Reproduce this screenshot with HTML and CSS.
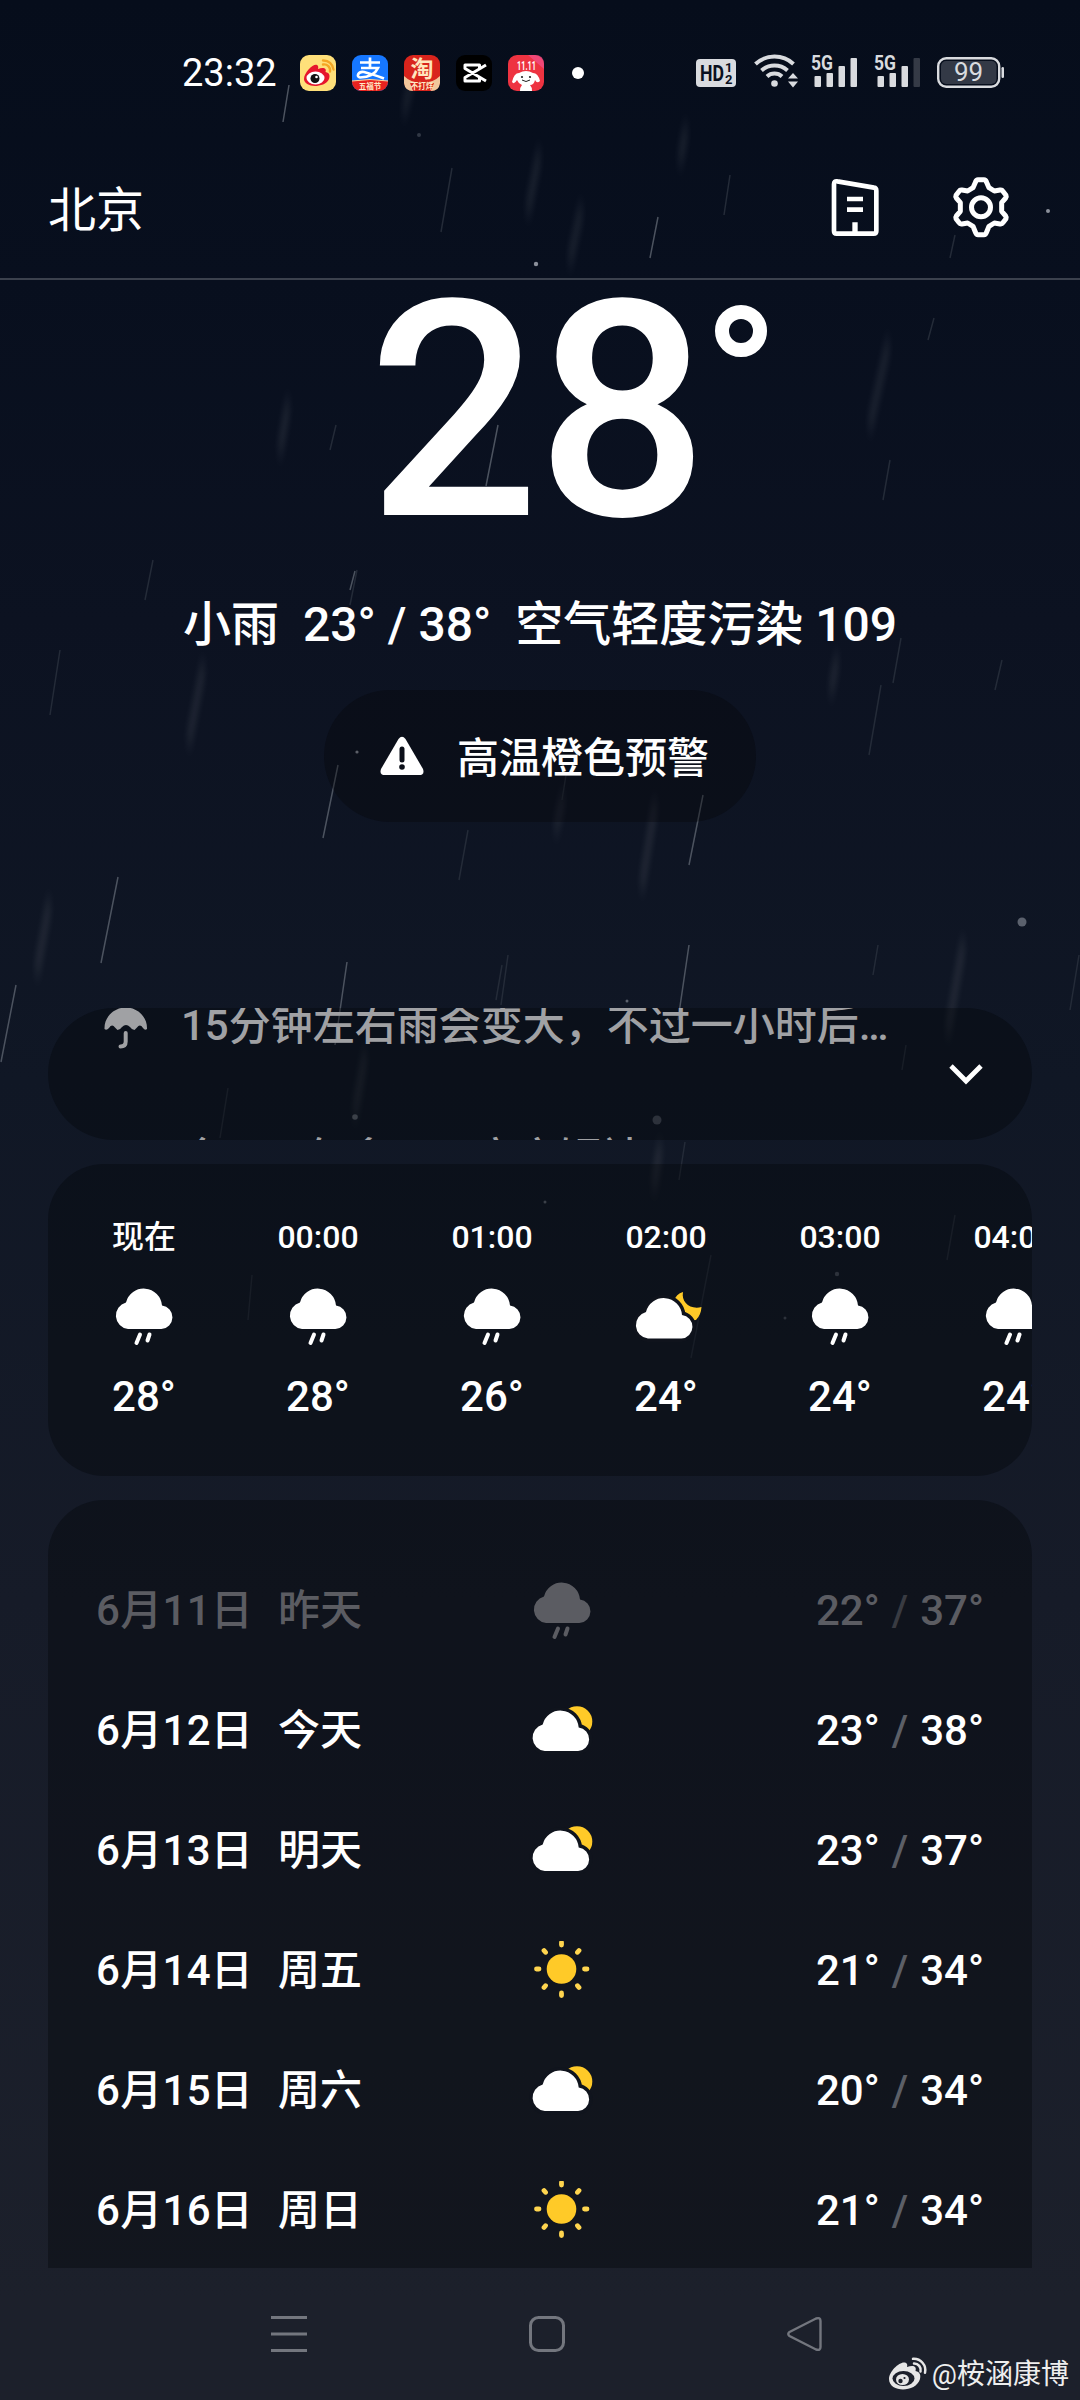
FILE: index.html
```html
<!DOCTYPE html>
<html lang="zh-CN">
<head>
<meta charset="utf-8">
<title>北京天气</title>
<link rel="stylesheet" href="styles.css">
</head>
<body>
<svg class="defs" width="0" height="0">
  <defs>
    <path id="cloud" d="M14 42A13.500 13.500 0 0 1 12 15.500A18.300 18.300 0 0 1 48 18.500A11.800 11.800 0 0 1 47.400 42Z"/>
    <symbol id="rain" viewBox="0 0 60 60" overflow="visible">
      <use href="#cloud"/>
      <path d="M26 47.500L22.500 56M35.500 47.500L33.500 53.500" fill="none" stroke="currentColor" stroke-width="4" stroke-linecap="round"/>
    </symbol>
    <symbol id="partly" viewBox="0 0 60 60" overflow="visible">
      <circle cx="45" cy="20.500" r="15.300" fill="#ffca28"/>
      <use href="#cloud" x="-1.300" y="8" stroke="#10141d" stroke-width="7"/>
      <use href="#cloud" x="-1.300" y="8"/>
    </symbol>
    <symbol id="night" viewBox="0 0 60 60" overflow="visible">
      <path d="M47 5C45 15 54 23 65.500 20Q65 28 60 33L46 34L38 14Q40 7 47 5Z" fill="#ffca28"/>
      <use href="#cloud" x="-2" y="9.500" stroke="#0f131c" stroke-width="7"/>
      <use href="#cloud" x="-2" y="9.500"/>
    </symbol>
    <symbol id="sun" viewBox="0 0 60 60">
      <circle cx="29.500" cy="28" r="14.800" fill="#ffca28"/>
      <g stroke="#ffd54f" stroke-width="4.800" stroke-linecap="round">
        <path d="M29.500 1.500v2.500M29.500 52v2.500M4.500 28h2.500M52.500 28h2.500M12 9.500l1.500 1.800M47 9.500l-1.500 1.800M12 46.500l1.500-1.800M47 46.500l-1.500-1.800"/>
      </g>
    </symbol>
  </defs>
</svg>
<div class="screen">
  <svg class="rainfall" viewBox="0 0 1080 2400" width="1080" height="2400">
    <defs><filter id="soft" filterUnits="userSpaceOnUse" x="0" y="0" width="1080" height="1300" color-interpolation-filters="sRGB"><feGaussianBlur stdDeviation="2.500 10"/></filter></defs>
    <path class="wide" filter="url(#soft)" d="M539 155L528 210M581 210L570 260M686 130L680 160M888 345L870 425M288 405L280 450M203 668L189 740M837 660L831 690M563 798L556 828M655 805L642 885M49 905L37 970M963 945L948 1030M365 1055L355 1112M660 1148L654 1185M412 80L404 110"/>
    <path class="faint" d="M452 168L441 232M934 318L928 340M336 425L330 450M890 460L883 500M730 175L724 215M955 235L950 258M357 570L350 605M901 638L893 683M881 685L869 755M468 830L459 880M153 560L145 600M60 650L50 715M502 965L496 1000M508 955L501 1005M878 945L873 975M1079 955L1070 1010M906 1045L902 1070M228 1088L220 1138M685 1142L679 1180M711 1255L691 1358M955 1215L947 1260M566 775L562 800M252 1275L248 1320M1002 660L995 690"/>
    <path class="thin" d="M289 85L283 122M658 217L650 258M498 425L486 486M338 765L323 838M703 795L689 865M118 877L101 963M16 985L1 1062M347 962L335 1045M689 945L678 1020M355 571L350 590"/>
    <g fill="#8b909b"><circle cx="536" cy="264" r="2.200"/><circle cx="1048" cy="211" r="2"/><circle cx="357" cy="752" r="1.600"/></g>
    <g fill="#5b616d"><circle cx="1022" cy="922" r="4.500"/><circle cx="355" cy="1117" r="2.800"/><circle cx="657" cy="1120" r="4.500" opacity=".7"/><circle cx="627" cy="1001" r="1.500"/><circle cx="545" cy="1202" r="1.500"/><circle cx="837" cy="1274" r="2.200" opacity=".7"/><circle cx="785" cy="1318" r="1.500" opacity=".7"/><circle cx="419" cy="135" r="2" opacity=".5"/></g>
  </svg>

  <div class="status">
    <span class="clock">23:32</span>
    <div class="apps">
      <svg viewBox="0 0 36 36"><rect width="36" height="36" rx="9" fill="#ffe07a"/><path d="M4 24C4 17 14 8 17 10C19 11 18 14 18 14C23 12 27 13 25.500 17C30 18 30 21 29 24C27 29 20 31 15 31C9 31 4 28 4 24Z" fill="#e6162d"/><ellipse cx="15.500" cy="23" rx="9" ry="6.500" fill="#fff"/><circle cx="15" cy="23.500" r="4.500" fill="#111"/><circle cx="16.500" cy="22" r="1.300" fill="#fff"/><path d="M23 9.500a6 6 0 0 1 7 7M23 5.500a10 10 0 0 1 10.500 9" fill="none" stroke="#f5a623" stroke-width="2.400" stroke-linecap="round"/></svg>
      <svg viewBox="0 0 36 36"><clipPath id="r1"><rect width="36" height="36" rx="9"/></clipPath><g clip-path="url(#r1)"><rect width="36" height="36" fill="#1677ff"/><path d="M0 26Q18 23 36 26V36H0Z" fill="#e8231f"/><path d="M0 26Q18 23 36 26" stroke="#ffd9a0" fill="none"/><path d="M8 7.500H28M18 2.500V13M9 13H26Q22 22 8 22.500C4 22 6 16 12 17Q20 19 32 23.500" fill="none" stroke="#fff" stroke-width="2.700"/><text x="18" y="34" class="t7" fill="#ffe9c8">五福节</text></g></svg>
      <svg viewBox="0 0 36 36"><rect width="36" height="36" rx="9" fill="#d9241c"/><path d="M0 21Q7 28 18 28T36 21V28Q35 36 27 36H9Q1 36 0 28Z" fill="#f2c79b"/><path d="M6 28H30L27 36H9Z" fill="#d9241c"/><text x="18" y="22" class="t24" fill="#ffe6bd">淘</text><text x="18" y="34" class="t7" fill="#ffe9c8">不打烊</text></svg>
      <svg viewBox="0 0 36 36"><rect width="36" height="36" rx="9" fill="#000"/><path d="M30 10L9 22.500V26H23.500V23M30 26L9 13.500V10H23.500V13" fill="none" stroke="#fff" stroke-width="3" stroke-linejoin="round"/></svg>
      <svg viewBox="0 0 36 36"><rect width="36" height="36" rx="9" fill="#ee3341"/><path d="M20 0H27Q36 0 36 9V14Z" fill="#f2559a" opacity=".6"/><text x="18.500" y="15" class="t13" fill="#fff" textLength="19" lengthAdjust="spacingAndGlyphs">11.11</text><path d="M4 27Q6 18 11 18Q18 14 25 18Q30 18 32 26Q29 29 27 25Q26 30 22 30Q24 32 24 36H12Q12 32 14 30Q10 28 9 25Q6 30 4 27Z" fill="#fff"/><circle cx="14" cy="22" r="1.100" fill="#222"/><circle cx="22" cy="22" r="1.100" fill="#222"/><path d="M14 25Q18 28 22 25" fill="none" stroke="#222"/></svg>
    </div>
    <span class="more"></span>
    <div class="signals">
      <svg width="40" height="28" viewBox="0 0 40 28"><rect width="40" height="28" rx="4" fill="#d9dbdf"/><g fill="#0a1020"><text x="4" y="22" class="hd" textLength="24" lengthAdjust="spacingAndGlyphs">HD</text><text x="29" y="13" class="hn">1</text><text x="29" y="25" class="hn">2</text></g></svg>
      <svg class="wifi" width="45" height="35" viewBox="0 0 45 35"><g fill="none" stroke="#d9dbdf" stroke-width="4"><path d="M1.500 11A28 28 0 0 1 39.500 11"/><path d="M7.500 17.500A19.500 19.500 0 0 1 33.500 17.500"/><path d="M13 23.500A11 11 0 0 1 28 23.500"/></g><circle cx="20.500" cy="30.500" r="3.300" fill="#d9dbdf"/><path d="M34 25.500L39 20L44 25.500ZM34 28.500L39 34.500L44 28.500Z" fill="#d9dbdf"/></svg>
      <svg class="cell" width="48" height="34" viewBox="0 0 48 34"><g fill="#d9dbdf"><text x="0" y="16" class="g5" textLength="22" lengthAdjust="spacingAndGlyphs">5G</text><rect x="3.500" y="22" width="6.500" height="11" rx="1"/><rect x="15.500" y="19" width="6.500" height="14" rx="1"/><rect x="27.500" y="12" width="6.500" height="21" rx="1"/><rect x="39.500" y="4" width="6.500" height="29" rx="1"/></g></svg>
      <svg class="cell" width="48" height="34" viewBox="0 0 48 34"><g fill="#d9dbdf"><text x="0" y="16" class="g5" textLength="22" lengthAdjust="spacingAndGlyphs">5G</text><rect x="3.500" y="22" width="6.500" height="11" rx="1"/><rect x="15.500" y="19" width="6.500" height="14" rx="1"/><rect x="27.500" y="12" width="6.500" height="21" rx="1"/><rect x="39.500" y="4" width="6.500" height="29" rx="1" opacity=".22"/></g></svg>
      <svg class="batt" width="68" height="32" viewBox="0 0 68 32"><rect x="1.200" y="1.200" width="61" height="28.600" rx="8" fill="none" stroke="#d9dbdf" stroke-width="2.400"/><rect x="4" y="4" width="55.500" height="23" rx="5" fill="#333946"/><rect x="64.500" y="10" width="2.500" height="11" rx="1.200" fill="#d9dbdf"/><text x="31.500" y="24" class="pct" fill="#d9dbdf">99</text></svg>
    </div>
  </div>

  <div class="header">
    <span class="city">北京</span>
    <svg width="50" height="60" viewBox="90 50 150 180"><path d="M102 72Q102 61 112 63L222 82Q229 83 229 91V212Q229 220 221 220H110Q102 220 102 212Z" fill="none" stroke="#fff" stroke-width="14"/><path d="M141 109h48v14h-48zM141 141h48v14h-48zM157 186h16v34h-16z" fill="#fff"/></svg>
    <svg class="gear" width="60" height="62" viewBox="453 47 180 186"><path d="M534 58H552Q557 58 559 64L567 82L583 92L600 89Q606 88 608 92L618 105Q620 109 617 113L605 127V153L617 167Q620 171 618 175L608 188Q606 192 600 191L583 188L567 198L559 217Q557 223 552 223H534Q529 223 527 217L519 198L503 188L486 191Q480 192 478 188L468 175Q466 171 469 167L481 153V127L469 113Q466 109 468 105L478 92Q480 88 486 89L503 92L519 82L527 64Q529 58 534 58Z" fill="none" stroke="#fff" stroke-width="15" stroke-linejoin="round"/><circle cx="543" cy="141" r="28.500" fill="none" stroke="#fff" stroke-width="15"/></svg>
  </div>

  <div class="hero">
    <div class="now"><span class="num">28</span><span class="deg"></span></div>
    <div class="summary"><span>小雨</span><span>23° / 38°</span><span>空气轻度污染 109</span></div>
    <div class="alert">
      <svg width="44" height="40" viewBox="0 0 44 40"><path d="M18.500 3Q22 -1.500 25.500 3L43 33Q45 39 39 39H5Q-1 39 1 33Z" fill="#fff"/><path d="M22 13V24" stroke="#0b0f19" stroke-width="5" stroke-linecap="round"/><circle cx="22" cy="31" r="2.800" fill="#0b0f19"/></svg>
      <span>高温橙色预警</span>
    </div>
  </div>

  <div class="tips card">
    <div class="ticker">
      <div class="tip"><svg width="44" height="44" viewBox="0 0 44 44"><path d="M.5 23C0 11 10 1.500 21.800 1.500S43.500 11 43 23Q41 25 39 22Q36 17.500 33 21.500L30.500 24Q28 24 26 21Q22 17 18 21Q16 24 13.500 24L11 21.500Q8 17.500 5 22Q2.500 25 .5 23Z" fill="currentColor"/><path d="M21.700 27V35.500Q21.700 40.500 16.500 40.500" fill="none" stroke="currentColor" stroke-width="4" stroke-linecap="round"/></svg><span>15分钟左右雨会变大，不过一小时后…</span></div>
      <div class="tip next"><svg width="44" height="44" viewBox="0 0 44 44"><path d="M8 3Q11 -1 14 3Q22 12 30 3Q33 -1 36 3L43 10L37 18L33 15V42H11V15L7 18L1 10Z" fill="currentColor"/></svg><span>今天天气多云，宜穿短袖</span></div>
    </div>
    <svg width="36" height="24" viewBox="0 0 36 24"><path d="M3 4L18 19L33 4" fill="none" stroke="#fff" stroke-width="4.800"/></svg>
  </div>

  <div class="hourly card">
    <div class="hour"><span class="time">现在</span><svg><use href="#rain"/></svg><span class="temp">28°</span></div>
    <div class="hour"><span class="time">00:00</span><svg><use href="#rain"/></svg><span class="temp">28°</span></div>
    <div class="hour"><span class="time">01:00</span><svg><use href="#rain"/></svg><span class="temp">26°</span></div>
    <div class="hour"><span class="time">02:00</span><svg><use href="#night"/></svg><span class="temp">24°</span></div>
    <div class="hour"><span class="time">03:00</span><svg><use href="#rain"/></svg><span class="temp">24°</span></div>
    <div class="hour"><span class="time">04:00</span><svg><use href="#rain"/></svg><span class="temp">24°</span></div>
  </div>

  <div class="daily card">
    <div class="day past"><span class="date">6月11日</span><span class="name">昨天</span><svg><use href="#rain"/></svg><span class="range"><span>22°</span><i>/</i><span>37°</span></span></div>
    <div class="day"><span class="date">6月12日</span><span class="name">今天</span><svg><use href="#partly"/></svg><span class="range"><span>23°</span><i>/</i><span>38°</span></span></div>
    <div class="day"><span class="date">6月13日</span><span class="name">明天</span><svg><use href="#partly"/></svg><span class="range"><span>23°</span><i>/</i><span>37°</span></span></div>
    <div class="day"><span class="date">6月14日</span><span class="name">周五</span><svg><use href="#sun"/></svg><span class="range"><span>21°</span><i>/</i><span>34°</span></span></div>
    <div class="day"><span class="date">6月15日</span><span class="name">周六</span><svg><use href="#partly"/></svg><span class="range"><span>20°</span><i>/</i><span>34°</span></span></div>
    <div class="day"><span class="date">6月16日</span><span class="name">周日</span><svg><use href="#sun"/></svg><span class="range"><span>21°</span><i>/</i><span>34°</span></span></div>
  </div>

  <div class="nav">
    <svg viewBox="0 0 36 36"><path d="M0 1.500H36M0 18H36M0 34.500H36"/></svg>
    <svg viewBox="0 0 36 36"><rect x="1.500" y="1.500" width="33" height="33" rx="8"/></svg>
    <svg viewBox="0 0 36 36"><path d="M2.500 16L29 2.500Q33.500 1 33.500 5V31Q33.500 35 29 33.500L2.500 20Q0 18 2.500 16Z" stroke-width="2.400"/></svg>
  </div>
  <div class="watermark">
    <svg width="40" height="34" viewBox="0 0 40 34"><path d="M1 22C1 14 13 3 18 6C20 7 19 10 19 10C25 8 29 9 27.500 14C32 15 33 18 32 22C30 29 22 32.500 15 32.500C8 32.500 1 29 1 22Z" fill="#e6e6e6"/><ellipse cx="15.500" cy="21.500" rx="11" ry="7.500" fill="#1c202b"/><ellipse cx="14.500" cy="22.500" rx="6.500" ry="5.500" fill="#e6e6e6"/><circle cx="12.500" cy="24" r="2.200" fill="#1c202b"/><circle cx="16.500" cy="21" r="1.100" fill="#1c202b"/><path d="M26 6.500a6.500 6.500 0 0 1 6.500 8M25 1.800a11.500 11.500 0 0 1 12 14" fill="none" stroke="#e6e6e6" stroke-width="2.500" stroke-linecap="round"/></svg>
    <span>@桉涵康博</span>
  </div>
</div>
</body>
</html>
```
FILE: styles.css
```css
* { box-sizing: border-box; }
body {
  margin: 0;
  background: #060d1b;
  color: #fff;
  font-family: Roboto, "Noto Sans CJK SC", sans-serif;
  font-weight: 500;
}
.defs { position: absolute; }
svg { display: block; flex: none; fill: currentColor; overflow: visible; }
.screen {
  position: relative;
  isolation: isolate;
  display: flex;
  flex-direction: column;
  width: 1080px;
  height: 2400px;
  overflow: hidden;
  background: linear-gradient(#060d1b 0, #080f1e 280px, #0c1221 620px, #101725 1080px, #161b28 1600px, #1c202b 2300px, #1c202b 100%);
}
.rainfall { position: absolute; inset: 0; z-index: -1; fill: none; }
.wide { stroke: rgba(255, 255, 255, .08); stroke-width: 7; stroke-linecap: round; }
.faint { stroke: #242b38; stroke-width: 1.5; }
.thin { stroke: #4c535f; stroke-width: 1.5; }

.status { display: flex; align-items: center; height: 145px; padding: 0 75px 0 182px; }
.clock { width: 118px; font-size: 38px; font-weight: 400; line-height: 44px; }
.apps { display: flex; gap: 16px; }
.apps svg { width: 36px; height: 36px; }
.t7, .t13, .t24 { text-anchor: middle; font-weight: 700; }
.t7 { font-size: 7.5px; }
.t13 { font-size: 13px; }
.t24 { font-size: 23px; }
.more { width: 12px; height: 12px; margin-left: 28px; border-radius: 50%; background: #fff; }
.signals { display: flex; align-items: center; margin-left: auto; }
.wifi { margin: -4px 0 0 18px; }
.cell { margin: -3px 0 0 12px; }
.cell + .cell { margin-left: 15px; }
.batt { margin-left: 15px; }
.hd { font-size: 22px; font-weight: 700; }
.hn { font-size: 13px; font-weight: 700; }
.g5 { font-size: 21px; font-weight: 700; }
.pct { font-size: 26px; font-weight: 400; text-anchor: middle; }

.header {
  display: flex;
  align-items: center;
  height: 135px;
  padding: 0 69px 9px 48px;
  border-bottom: 2px solid #3b414d;
}
.city { flex: 1; padding-top: 8px; font-size: 48px; font-weight: 400; line-height: 60px; }
.gear { margin-left: 71px; }

.hero { display: flex; flex-direction: column; align-items: center; height: 728px; }
.now { display: flex; align-items: flex-start; height: 264px; padding-left: 55px; }
.num { font-size: 302px; line-height: 265px; letter-spacing: -3px; }
.deg { width: 52px; height: 52px; margin: 25px 0 0 10px; border: 14px solid #fff; border-radius: 50%; }
.summary { display: flex; gap: 24px; margin-top: 51px; font-size: 48px; line-height: 60px; white-space: nowrap; }
.alert {
  display: flex;
  align-items: center;
  gap: 33px;
  width: 432px;
  height: 132px;
  margin-top: 35px;
  padding-left: 56px;
  border-radius: 66px;
  background: rgba(5, 7, 10, .35);
  font-size: 42px;
  line-height: 60px;
}
.alert span { padding-top: 6px; }

.card { width: 984px; margin-left: 48px; background: rgba(4, 6, 9, .36); overflow: hidden; }
.tips {
  display: flex;
  align-items: center;
  justify-content: space-between;
  height: 132px;
  padding: 0 48px 0 56px;
  border-radius: 66px;
}
.ticker { align-self: flex-start; margin-top: -49px; color: #a0a1a4; }
.tip { display: flex; align-items: center; gap: 33px; height: 133px; font-size: 42px; line-height: 60px; white-space: nowrap; }
.tip svg { margin-top: 4px; }

.hourly { display: flex; height: 312px; margin-top: 24px; padding: 48px 0 0 9px; border-radius: 56px; }
.hour { display: flex; flex: none; flex-direction: column; align-items: center; width: 174px; }
.time { font-size: 32px; line-height: 50px; }
.hour svg { width: 60px; height: 60px; margin: 25px 0 20px; }
.temp { font-size: 42px; line-height: 60px; }

.daily { height: 768px; margin-top: 24px; padding-top: 51px; border-radius: 56px 56px 0 0; font-size: 42px; line-height: 60px; }
.day { display: flex; align-items: center; height: 120px; padding: 0 48px; white-space: nowrap; }
.date { width: 182px; letter-spacing: .3px; }
.name { width: 254px; }
.day svg { width: 60px; height: 60px; }
.range { display: flex; gap: 12px; margin-left: auto; }
.range i { color: #5c5f67; font-style: normal; }
.past { color: #5b5c62; }
.past .range i { color: #393b42; }

.nav { display: flex; gap: 222px; padding: 48px 0 0 271px; }
.nav svg { width: 36px; height: 36px; fill: none; stroke: #73767e; stroke-width: 3; }
.watermark {
  display: flex;
  align-items: center;
  justify-content: flex-end;
  gap: 4px;
  padding: 2px 11px 0 0;
  color: #eee;
  font-size: 28px;
  font-weight: 400;
  line-height: 42px;
}
.watermark svg { margin-top: -2px; }
```
